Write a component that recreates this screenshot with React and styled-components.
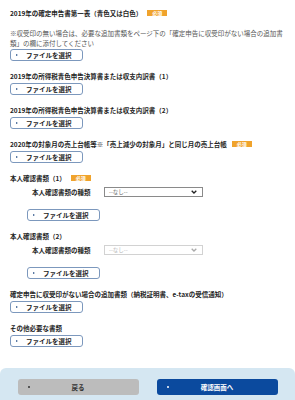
import React from "react";
import styled, { createGlobalStyle } from "styled-components";

const Global = createGlobalStyle`
  html, body { margin: 0; padding: 0; background: #ffffff; }
  body {
    font-family: "Noto Sans CJK JP", "Noto Sans", sans-serif;
    color: #222;
  }
`;

const Page = styled.div`
  width: 295px;
  min-height: 400px;
  display: flex;
  flex-direction: column;
  overflow: hidden;
`;

const Main = styled.div`
  padding: 8px 10px 0;
  display: flex;
  flex-direction: column;
`;

const Section = styled.section`
  display: flex;
  flex-direction: column;
  margin-top: ${(p) => (p.$first ? 0 : 10)}px;
`;

const Title = styled.div`
  display: flex;
  align-items: center;
  height: 10px;
  line-height: 10px;
  font-size: 6.5px;
  font-weight: 700;
  color: #1e1e1e;
  white-space: nowrap;
`;

const Badge = styled.span`
  display: inline-block;
  margin-left: 5px;
  height: 6px;
  line-height: 6px;
  padding: 0 5px;
  font-size: 5px;
  font-weight: 700;
  color: #fff;
  background: #f0a32c;
`;

const Note = styled.p`
  margin: 10px 0 0;
  font-size: 6.5px;
  line-height: 10px;
  color: #555;
`;

const FileButton = styled.button`
  display: flex;
  align-items: center;
  box-sizing: border-box;
  width: 73px;
  height: 12px;
  margin-top: ${(p) => p.$mt ?? 2}px;
  margin-left: ${(p) => p.$ml ?? 0}px;
  padding: 0 0 0 5px;
  background: #fff;
  border: 1px solid #7c98bd;
  border-radius: 3px;
  font-family: inherit;
  font-size: 6.5px;
  font-weight: 700;
  color: #1e1e1e;
  cursor: pointer;
`;

const Arrow = styled.span`
  width: 0;
  height: 0;
  border-top: 1.5px solid transparent;
  border-bottom: 1.5px solid transparent;
  border-left: 2px solid #274f86;
  margin-right: 8px;
`;

const SelectRow = styled.div`
  display: flex;
  align-items: center;
  margin-top: 4px;
  padding-left: 22px;
  height: 10px;
`;

const Label = styled.span`
  width: 72px;
  font-size: 6.5px;
  font-weight: 700;
  color: #1e1e1e;
  white-space: nowrap;
`;

const Select = styled.div`
  box-sizing: border-box;
  width: 99px;
  height: 10px;
  border: 1px solid ${(p) => (p.$disabled ? "#d2d2d2" : "#8a8a8a")};
  display: flex;
  align-items: center;
  justify-content: space-between;
  padding: 0 5px 0 4px;
  font-size: 5.5px;
  color: ${(p) => (p.$disabled ? "#b8b8b8" : "#666")};
  background: #fff;
`;

const Footer = styled.footer`
  margin-top: 21px;
  height: 32px;
  box-sizing: border-box;
  padding-top: 11px;
  background: #d5e7f2;
  border-radius: 6px 6px 0 0;
  display: flex;
  justify-content: center;
  align-items: flex-start;
  gap: 18px;
`;

const NavButton = styled.button`
  position: relative;
  width: 121px;
  height: 16px;
  border: none;
  border-radius: 3px;
  background: ${(p) => (p.$primary ? "#0b4a9e" : "#bcbcbc")};
  color: ${(p) => (p.$primary ? "#fff" : "#333")};
  font-family: inherit;
  font-size: 6.5px;
  font-weight: 700;
  display: flex;
  align-items: center;
  justify-content: center;
  cursor: pointer;
`;

const NavDot = styled.span`
  position: absolute;
  left: 10px;
  top: 7px;
  width: 2px;
  height: 2px;
  border-radius: 50%;
  background: ${(p) => (p.$primary ? "#fff" : "#333")};
`;

const Chevron = ({ color }) => (
  <svg width="6" height="4" viewBox="0 0 6 4">
    <polyline points="0.7,0.7 3,3 5.3,0.7" fill="none" stroke={color} strokeWidth="1.3" />
  </svg>
);

const FileBtn = (props) => (
  <FileButton {...props}>
    <Arrow />
    ファイルを選択
  </FileButton>
);

export default function App() {
  return (
    <>
      <Global />
      <Page>
        <Main>
          <Section $first>
            <Title>
              2019年の確定申告書第一表（青色又は白色）<Badge>必須</Badge>
            </Title>
            <Note>
              ※収受印の無い場合は、必要な追加書類をページ下の「確定申告に収受印がない場合の追加書類」の欄に添付してください
            </Note>
            <FileBtn $mt={1} />
          </Section>
          <Section>
            <Title>2019年の所得税青色申告決算書または収支内訳書（1）</Title>
            <FileBtn />
          </Section>
          <Section>
            <Title>2019年の所得税青色申告決算書または収支内訳書（2）</Title>
            <FileBtn />
          </Section>
          <Section>
            <Title>
              2020年の対象月の売上台帳等※「売上減少の対象月」と同じ月の売上台帳<Badge>必須</Badge>
            </Title>
            <FileBtn />
          </Section>
          <Section>
            <Title>
              本人確認書類（1）<Badge>必須</Badge>
            </Title>
            <SelectRow>
              <Label>本人確認書類の種類</Label>
              <Select>
                <span>--なし--</span>
                <Chevron color="#222" />
              </Select>
            </SelectRow>
            <FileBtn $mt={12} $ml={17} />
          </Section>
          <Section>
            <Title>本人確認書類（2）</Title>
            <SelectRow>
              <Label>本人確認書類の種類</Label>
              <Select $disabled>
                <span>--なし--</span>
                <Chevron color="#aaa" />
              </Select>
            </SelectRow>
            <FileBtn $mt={12} $ml={17} />
          </Section>
          <Section>
            <Title>確定申告に収受印がない場合の追加書類（納税証明書、e-taxの受信通知）</Title>
            <FileBtn />
          </Section>
          <Section>
            <Title>その他必要な書類</Title>
            <FileBtn />
          </Section>
        </Main>
        <Footer>
          <NavButton>
            <NavDot />
            戻る
          </NavButton>
          <NavButton $primary>
            <NavDot $primary />
            確認画面へ
          </NavButton>
        </Footer>
      </Page>
    </>
  );
}
